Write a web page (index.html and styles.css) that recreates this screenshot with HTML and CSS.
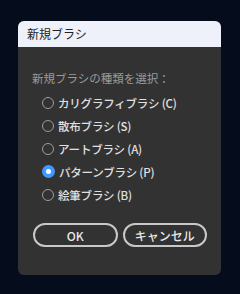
FILE: index.html
```html
<!DOCTYPE html>
<html lang="ja">
<head>
  <meta charset="UTF-8">
  <title>新規ブラシ</title>
  <link rel="stylesheet" href="styles.css">
</head>
<body>

<div class="dialog">
  <div class="title">新規ブラシ</div>
  <div class="body">
    <p class="prompt">新規ブラシの種類を選択：</p>
    <label class="opt"><span class="radio"></span>カリグラフィブラシ (C)</label>
    <label class="opt"><span class="radio"></span>散布ブラシ (S)</label>
    <label class="opt"><span class="radio"></span>アートブラシ (A)</label>
    <label class="opt"><span class="radio on"></span>パターンブラシ (P)</label>
    <label class="opt"><span class="radio"></span>絵筆ブラシ (B)</label>
    <div class="buttons">
      <button>OK</button>
      <button>キャンセル</button>
    </div>
  </div>
</div>

</body>
</html>
```

FILE: styles.css
```css
html { background: #050d1c; }
body { margin: 0; padding: 21px 19px 0 18px; font-family: "Noto Sans CJK JP", "Noto Sans", sans-serif; font-size: 11.5px; }
.dialog { width: 203px; background: #323232; border-radius: 6px; overflow: hidden; }
.title { height: 26px; line-height: 26px; background: #eef0fa; color: #222; padding-left: 9px; font-size: 12px; }
.body { padding: 23px 14px 28px 14px; }
.prompt { margin: 0 0 5px 0; color: #9a9a9a; line-height: 16px; }
.opt { display: flex; align-items: center; height: 23px; padding-left: 10px; color: #e0e0e0; font-weight: 500; letter-spacing: -0.2px; }
.radio { width: 10px; height: 10px; border: 1.5px solid #9c9c9c; border-radius: 50%; margin: 0 4px 0 0; box-sizing: content-box; }
.radio.on { background: #fff; border: 4px solid #3d9bff; width: 5px; height: 5px; }
.buttons { display: flex; gap: 5px; margin-top: 17px; padding-left: 1px; }
button { flex: 1; height: 24px; border: 2px solid #c8c8c8; border-radius: 12px; background: transparent; color: #e8e8e8; font-family: inherit; font-size: 12px; font-weight: 500; }
```
